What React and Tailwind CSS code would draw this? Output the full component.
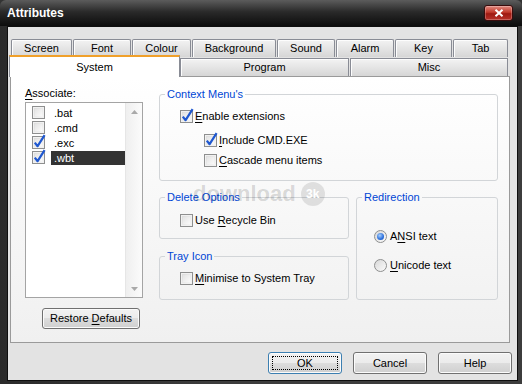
import React from "react";

const FONT = "font-['Liberation_Sans',Arial,sans-serif]";

function Check({ checked }) {
  return (
    <span className="relative inline-block w-[13px] h-[13px] shrink-0 border border-[#8e8f8f] bg-[linear-gradient(135deg,#d9d9d9,#f9f9f9)]">
      <span className="absolute inset-0 border border-[#f1f1f1]" />
      <span className="absolute inset-[2px] bg-[linear-gradient(135deg,#e4e4e4,#fafafa)]" />
      {checked && (
        <svg className="absolute left-[0px] top-[-3px] overflow-visible" width="13" height="15" viewBox="0 0 13 15">
          <path d="M1.8 8.6 L4.6 12.2 L11.6 1.2" stroke="#1f58d0" strokeWidth="2.2" fill="none" strokeLinejoin="round" />
        </svg>
      )}
    </span>
  );
}

function Radio({ checked }) {
  return (
    <span className="relative inline-flex items-center justify-center w-[13px] h-[13px] shrink-0 rounded-full border border-[#8e8f8f] bg-[linear-gradient(135deg,#d8d8d8,#fbfbfb)]">
      {checked && (
        <span className="w-[7px] h-[7px] rounded-full bg-[radial-gradient(circle_at_40%_35%,#a9d0fb,#2b6fdc_60%,#1a4fb0)]" />
      )}
    </span>
  );
}

function U({ children }) {
  return <span className="underline underline-offset-[2px]">{children}</span>;
}

function Btn({ children, className = "", focused = false }) {
  return (
    <div
      className={`relative flex items-center justify-center rounded-[3px] border ${
        focused ? "border-[#3c7fb1]" : "border-[#707070]"
      } bg-[linear-gradient(#f2f2f2_0%,#ebebeb_50%,#dddddd_50%,#cfcfcf_100%)] shadow-[inset_0_0_0_1px_#fbfbfb] text-[11px] text-black ${className}`}
    >
      {focused && <span className="absolute inset-[3px] border border-dotted border-black" />}
      <span className="relative">{children}</span>
    </div>
  );
}

function Tab({ w, children }) {
  return (
    <div
      className={`${w} h-[18px] flex items-center justify-center border border-b-0 border-[#898c95] rounded-t-[2px] bg-[linear-gradient(#f3f3f3,#d6d6d6)] shadow-[inset_1px_1px_0_#fdfdfd] text-[11px] text-black`}
    >
      {children}
    </div>
  );
}

function Group({ label, className = "", children }) {
  return (
    <fieldset className={`border border-[#d2d5d8] rounded-[3px] ${className}`}>
      <legend className="ml-[5px] px-[2px] text-[11px] leading-[14px] text-[#0046d5]">{label}</legend>
      {children}
    </fieldset>
  );
}

const items = [
  { name: ".bat", checked: false },
  { name: ".cmd", checked: false },
  { name: ".exc", checked: true },
  { name: ".wbt", checked: true, selected: true },
];

export default function App() {
  return (
    <div className={`relative w-[522px] h-[384px] overflow-hidden flex flex-col bg-[#333333] ${FONT}`}>
      {/* title bar */}
      <div className="h-[26px] shrink-0 flex items-start justify-between pl-[7px] pr-[9px] rounded-t-[6px] bg-[linear-gradient(#5c5c5c,#2a2a2a_45%,#0c0c0c)]">
        <span className="mt-[5px] text-white font-bold text-[12px] leading-[16px]">Attributes</span>
        <div className="mt-[5px] w-[29px] h-[16px] rounded-[3px] border border-[#3a0c0c] bg-[linear-gradient(#e08a80,#c23a2c_45%,#9e1a12_55%,#b8322a)] flex items-center justify-center shadow-[inset_0_0_0_1px_rgba(255,255,255,0.25)]">
          <svg width="10" height="8" viewBox="0 0 10 8">
            <path d="M1.5 0.8 L8.5 7.2 M8.5 0.8 L1.5 7.2" stroke="#fff" strokeWidth="2" />
          </svg>
        </div>
      </div>

      {/* frame + client */}
      <div className="flex-1 flex pl-[7px] pr-[4px] pb-[3px] bg-[linear-gradient(90deg,#2a2a2a,#3c3c3c_40%,#3c3c3c)]">
        <div className="flex-1 border border-[#0e0e0e] bg-[#e3e3e3] flex flex-col">
          {/* tab row 1 */}
          <div className="flex gap-px ml-[3px] mt-[12px]">
            <Tab w="w-[61px]">Screen</Tab>
            <Tab w="w-[58px]">Font</Tab>
            <Tab w="w-[59px]">Colour</Tab>
            <Tab w="w-[84px]">Background</Tab>
            <Tab w="w-[58px]">Sound</Tab>
            <Tab w="w-[58px]">Alarm</Tab>
            <Tab w="w-[57px]">Key</Tab>
            <Tab w="w-[55px]">Tab</Tab>
          </div>
          {/* tab row 2 */}
          <div className="flex items-end h-[22px] mt-[-2px] relative z-10">
            <div className="ml-[1px] w-[171px] h-[22px] flex items-start justify-center pt-[2px] border-x border-[#898c95] border-t-[2px] border-t-[#f0a02a] bg-white text-[11px] text-black">
              System
            </div>
            <div className="w-[169px] h-[18px] mb-[1px] flex items-center justify-center border border-b-0 border-[#898c95] bg-[linear-gradient(#f3f3f3,#d6d6d6)] shadow-[inset_1px_1px_0_#fdfdfd] text-[11px] text-black">
              Program
            </div>
            <div className="ml-[1px] w-[158px] h-[18px] mb-[1px] flex items-center justify-center border border-b-0 border-[#898c95] bg-[linear-gradient(#f3f3f3,#d6d6d6)] shadow-[inset_1px_1px_0_#fdfdfd] text-[11px] text-black">
              Misc
            </div>
          </div>

          {/* panel */}
          <div className="ml-[2px] mt-[-1px] w-[500px] h-[267px] border border-[#9a9a9a] bg-[linear-gradient(#ffffff,#f0f0f0)] flex text-[11px] text-black">
            {/* left column */}
            <div className="ml-[14px] pt-[9px] w-[118px] flex flex-col">
              <div className="h-[14px] leading-[14px]">
                <U>A</U>ssociate:
              </div>
              <div className="mt-[2px] h-[196px] border border-[#a4a4a4] bg-white flex">
                <div className="flex-1 flex flex-col pt-[2px]">
                  {items.map((it) => (
                    <div key={it.name} className="h-[15px] flex items-center pl-[6px]">
                      <Check checked={it.checked} />
                      <div
                        className={`ml-[6px] flex-1 h-[14px] leading-[14px] px-[3px] ${
                          it.selected ? "bg-[#333333] text-white" : ""
                        }`}
                      >
                        {it.name}
                      </div>
                    </div>
                  ))}
                </div>
                <div className="w-[17px] flex flex-col justify-between border-l border-[#e6e6e6] bg-[linear-gradient(90deg,#efefef,#fbfbfb)]">
                  <div className="h-[17px] flex items-center justify-center">
                    <svg width="7" height="4" viewBox="0 0 7 4">
                      <path d="M0 4 L3.5 0 L7 4Z" fill="#a9a9a9" />
                    </svg>
                  </div>
                  <div className="h-[17px] flex items-center justify-center">
                    <svg width="7" height="4" viewBox="0 0 7 4">
                      <path d="M0 0 L3.5 4 L7 0Z" fill="#a9a9a9" />
                    </svg>
                  </div>
                </div>
              </div>
              <Btn className="mt-[10px] ml-[17px] w-[98px] h-[21px]">
                Restore <U>D</U>efaults
              </Btn>
            </div>

            {/* right column */}
            <div className="ml-[16px] pt-[10px] w-[339px] flex flex-col">
              <Group label="Context Menu's" className="h-[94px]">
                <div className="mt-[7px] pl-[20px] h-[16px] flex items-center gap-[2px]">
                  <Check checked />
                  <span>
                    <U>E</U>nable extensions
                  </span>
                </div>
                <div className="mt-[8px] pl-[44px] h-[16px] flex items-center gap-[2px]">
                  <Check checked />
                  <span>
                    <U>I</U>nclude CMD.EXE
                  </span>
                </div>
                <div className="mt-[4px] pl-[44px] h-[16px] flex items-center gap-[2px]">
                  <Check />
                  <span>
                    <U>C</U>ascade menu items
                  </span>
                </div>
              </Group>

              <div className="mt-[9px] flex gap-[7px]">
                <div className="w-[190px] flex flex-col">
                  <Group label="Delete Options" className="h-[49px]">
                    <div className="mt-[8px] pl-[20px] h-[16px] flex items-center gap-[2px]">
                      <Check />
                      <span>
                        Use <U>R</U>ecycle Bin
                      </span>
                    </div>
                  </Group>
                  <Group label="Tray Icon" className="mt-[10px] h-[51px]">
                    <div className="mt-[7px] pl-[20px] h-[16px] flex items-center gap-[2px]">
                      <Check />
                      <span>
                        <U>M</U>inimise to System Tray
                      </span>
                    </div>
                  </Group>
                </div>
                <Group label="Redirection" className="w-[142px] h-[110px]">
                  <div className="mt-[24px] pl-[17px] h-[16px] flex items-center gap-[3px]">
                    <Radio checked />
                    <span>
                      A<U>N</U>SI text
                    </span>
                  </div>
                  <div className="mt-[13px] pl-[17px] h-[16px] flex items-center gap-[3px]">
                    <Radio />
                    <span>
                      <U>U</U>nicode text
                    </span>
                  </div>
                </Group>
              </div>
            </div>
          </div>

          {/* buttons */}
          <div className="mt-[9px] flex justify-end gap-[11px] pr-[5px]">
            <Btn focused className="w-[74px] h-[22px]">
              OK
            </Btn>
            <Btn className="w-[74px] h-[22px]">Cancel</Btn>
            <Btn className="w-[74px] h-[22px]">Help</Btn>
          </div>
        </div>
      </div>

      {/* watermark */}
      <div className="absolute left-[193px] top-[182px] flex items-center gap-[5px] pointer-events-none select-none">
        <span className="text-[22px] font-bold leading-[24px] text-black/15">download</span>
        <span className="w-[24px] h-[24px] rounded-full bg-black/10 flex items-center justify-center text-[12px] font-bold text-white leading-none">
          3k
        </span>
      </div>
    </div>
  );
}
